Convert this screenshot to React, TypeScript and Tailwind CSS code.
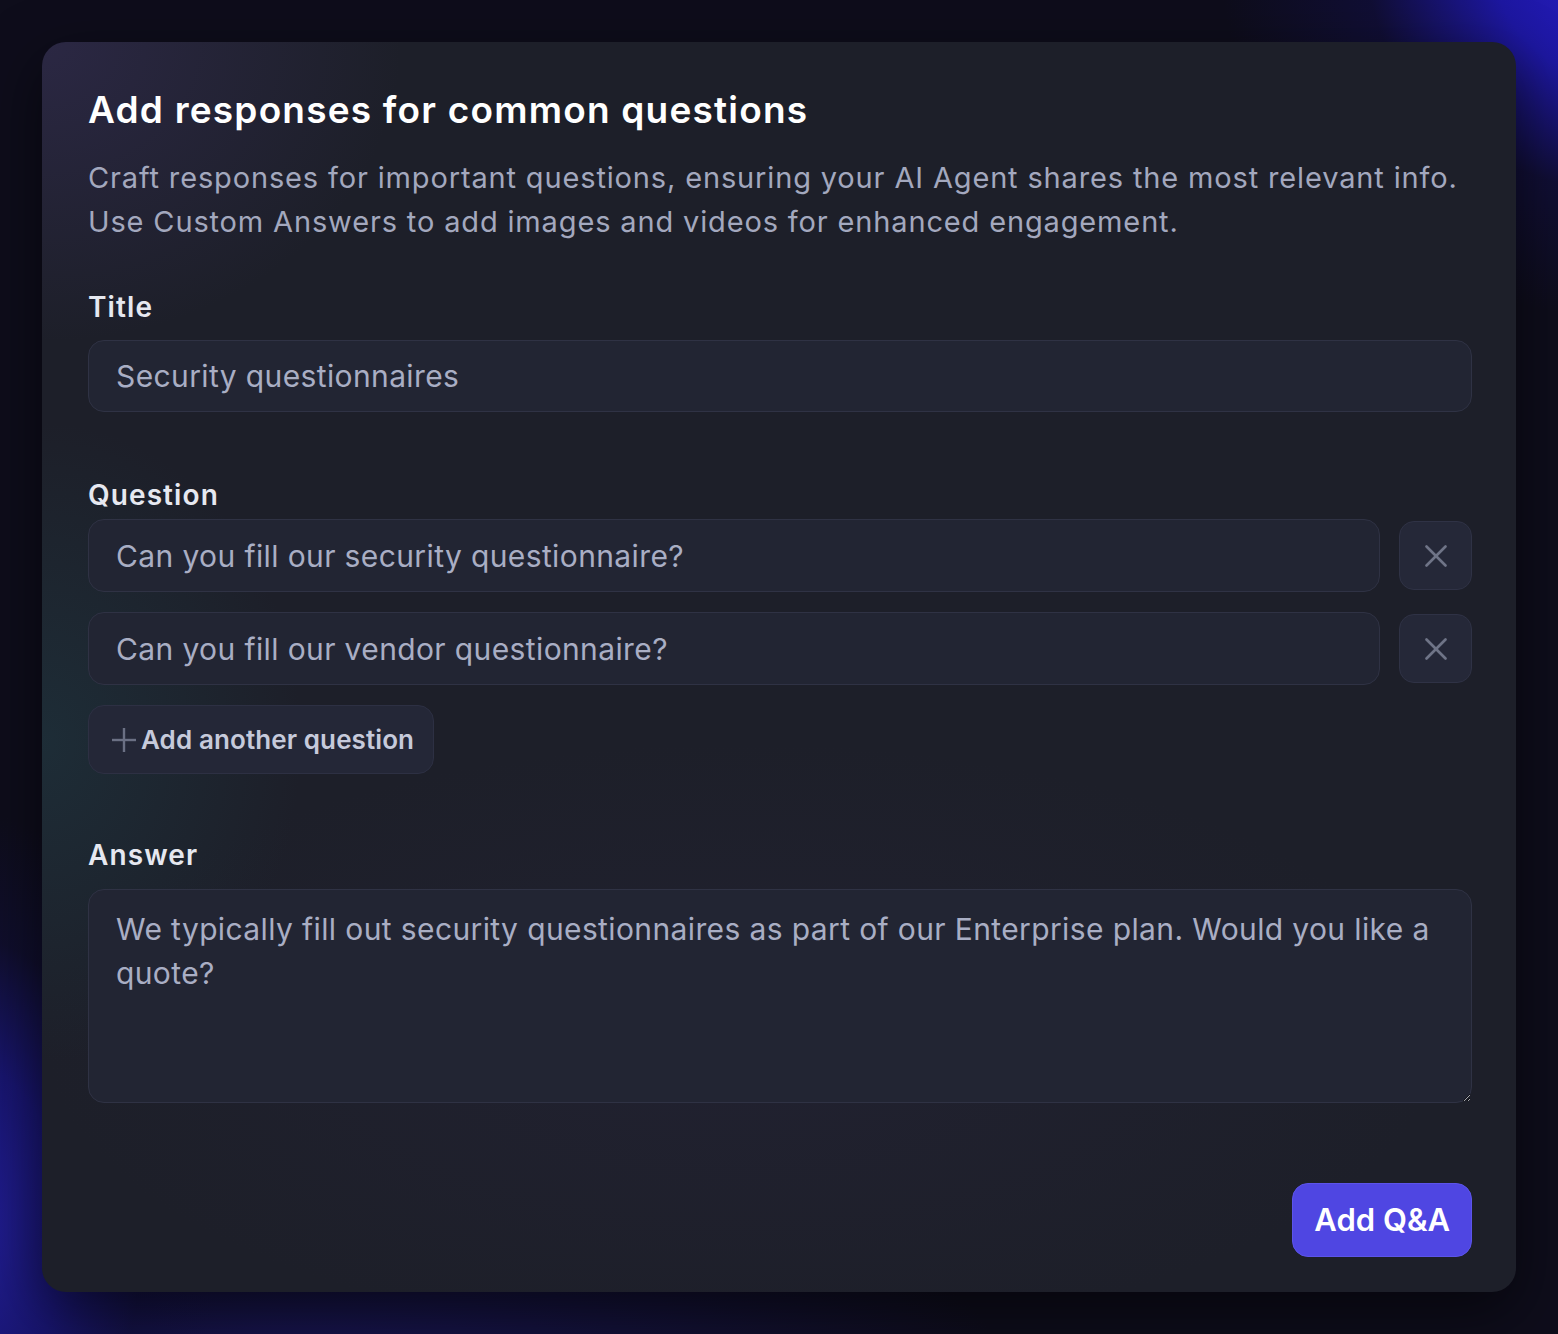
import React from "react";

function XIcon() {
  return (
    <svg width="22" height="22" viewBox="0 0 22 22" fill="none" stroke="#6f7487" strokeWidth="2.6" strokeLinecap="round">
      <path d="M1.5 1.5 L20.5 20.5" />
      <path d="M20.5 1.5 L1.5 20.5" />
    </svg>
  );
}

function PlusIcon() {
  return (
    <svg width="26" height="26" viewBox="0 0 26 26" fill="none" stroke="#6b7084" strokeWidth="2.4">
      <path d="M13 1 L13 25" />
      <path d="M1 13 L25 13" />
    </svg>
  );
}

export default function App() {
  const font = { fontFamily: "Inter, 'Noto Sans', sans-serif", fontOpticalSizing: "none" as const };
  return (
    <div
      style={font}
      className="min-h-screen w-full p-[42px] bg-[#0e0d1b] bg-[radial-gradient(ellipse_420px_360px_at_1640px_-40px,#2a1fd0_0%,#1d17a0_35%,rgba(20,16,90,0.4)_65%,transparent_100%),radial-gradient(ellipse_260px_420px_at_-40px_1230px,#231f9a_0%,#18156e_40%,rgba(18,16,70,0.4)_70%,transparent_100%),radial-gradient(ellipse_700px_200px_at_300px_1360px,rgba(30,26,120,0.6)_0%,transparent_100%)]"
    >
      <div className="rounded-[24px] bg-[#1d1f29] bg-[radial-gradient(ellipse_360px_300px_at_0px_0px,rgba(60,50,100,0.45)_0%,transparent_100%),radial-gradient(ellipse_260px_320px_at_0px_700px,rgba(30,70,80,0.35)_0%,transparent_100%),radial-gradient(ellipse_700px_300px_at_700px_1000px,rgba(45,40,70,0.25)_0%,transparent_100%)] pl-[46px] pr-[44px] pt-[46px] pb-[35px] shadow-[0_20px_60px_rgba(0,0,0,0.55)]">
        <h1 className="text-[37px] leading-[44px] font-semibold text-white tracking-[1.2px]">
          Add responses for common questions
        </h1>
        <p className="mt-[24px] text-[29px] leading-[44px] text-[#a3a8be] tracking-[0.85px]">
          Craft responses for important questions, ensuring your AI Agent shares the most relevant info.
          <br />
          Use Custom Answers to add images and videos for enhanced engagement.
        </p>

        <div className="mt-[46px] text-[28px] leading-[34px] font-semibold text-[#e6e8f0] tracking-[1.1px]">Title</div>
        <input
          defaultValue="Security questionnaires"
          className="mt-[16px] block w-full h-[72px] rounded-[16px] border border-[#2f3244] bg-[#222533] pl-[27px] text-[30px] tracking-[0.38px] text-[#a9aec4] outline-none"
          style={font}
        />

        <div className="mt-[66px] text-[28px] leading-[34px] font-semibold text-[#e6e8f0] tracking-[1.1px]">Question</div>
        <div className="mt-[7px] flex flex-col gap-[20px]">
          {["Can you fill our security questionnaire?", "Can you fill our vendor questionnaire?"].map((q) => (
            <div key={q} className="flex items-center gap-[19px]">
              <input
                defaultValue={q}
                className="block flex-1 h-[73px] rounded-[16px] border border-[#2f3244] bg-[#222533] pl-[27px] text-[30px] tracking-[0.38px] text-[#a9aec4] outline-none"
                style={font}
              />
              <button className="flex h-[69px] w-[73px] shrink-0 items-center justify-center rounded-[15px] border border-[#2f3245] bg-[#252838]">
                <XIcon />
              </button>
            </div>
          ))}
        </div>
        <button className="mt-[20px] flex h-[69px] items-center gap-[4px] rounded-[16px] border border-[#2d3043] bg-[#242737] pl-[22px] pr-[19px]">
          <PlusIcon />
          <span className="text-[26px] font-semibold text-[#c6cadb] tracking-[0.1px]" style={font}>Add another question</span>
        </button>

        <div className="mt-[64px] text-[28px] leading-[34px] font-semibold text-[#e6e8f0] tracking-[1.1px]">Answer</div>
        <textarea
          defaultValue="We typically fill out security questionnaires as part of our Enterprise plan. Would you like a quote?"
          className="mt-[17px] block w-full h-[214px] rounded-[16px] border border-[#2f3244] bg-[#222533] pl-[27px] pr-[27px] pt-[17px] text-[30px] leading-[44px] tracking-[0.38px] text-[#a9aec4] outline-none"
          style={font}
        />

        <div className="mt-[80px] flex justify-end">
          <button className="h-[74px] rounded-[16px] border border-[#5c54ea] bg-[#4f46e2] px-[21px] text-[31px] font-semibold text-white" style={font}>
            Add Q&amp;A
          </button>
        </div>
      </div>
    </div>
  );
}
